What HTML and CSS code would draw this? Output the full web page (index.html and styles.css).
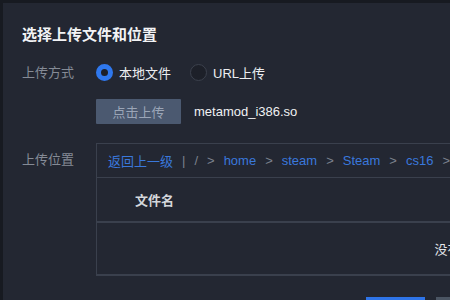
FILE: index.html
```html
<!DOCTYPE html>
<html>
<head>
<meta charset="utf-8">
<link rel="stylesheet" href="styles.css">
</head>
<body>
<div class="dialog">
  <h1 class="title">选择上传文件和位置</h1>
  <div class="row row-mode">
    <div class="label">上传方式</div>
    <div class="field radios">
      <label class="radio"><span class="dot checked"></span><span class="rtext">本地文件</span></label>
      <label class="radio"><span class="dot"></span><span class="rtext">URL上传</span></label>
    </div>
  </div>
  <div class="row row-file">
    <div class="label"></div>
    <div class="field file">
      <button class="upload-btn">点击上传</button>
      <span class="filename">metamod_i386.so</span>
    </div>
  </div>
  <div class="row row-loc">
    <div class="label loc-label">上传位置</div>
    <div class="field">
      <div class="table">
        <div class="crumbs">
          <a class="link">返回上一级</a>
          <span class="sep bar">|</span>
          <span class="sep">/</span>
          <span class="sep">&gt;</span>
          <a class="link">home</a>
          <span class="sep">&gt;</span>
          <a class="link">steam</a>
          <span class="sep">&gt;</span>
          <a class="link">Steam</a>
          <span class="sep">&gt;</span>
          <a class="link">cs16</a>
          <span class="sep">&gt;</span>
        </div>
        <div class="thead"><span class="th">文件名</span></div>
        <div class="tbody"><span class="empty">没有数据</span></div>
      </div>
    </div>
  </div>
  <div class="footer">
    <button class="btn primary">确定</button>
    <button class="btn">取消</button>
  </div>
</div>
</body>
</html>
```

FILE: styles.css
```css
html, body {
  margin: 0;
  padding: 0;
  overflow: hidden;
  height: 100%;
}
body {
  background: #171a21;
  font-family: "Liberation Sans", "Noto Sans CJK SC", sans-serif;
  font-size: 13px;
  color: #e4e6ea;
}
.dialog {
  margin: 3px 0 0 3px;
  width: 900px;
  height: 400px;
  background: #232732;
  padding: 22px 0 0 19px;
  box-sizing: border-box;
}
.title {
  margin: 0;
  font-size: 15px;
  line-height: 20px;
  font-weight: bold;
  color: #f2f3f5;
}
.row {
  display: flex;
  align-items: center;
}
.label {
  width: 74px;
  flex: none;
  color: #858b96;
  line-height: 20px;
}
.row-mode {
  margin-top: 14px;
  height: 27px;
}
.radios {
  display: flex;
  gap: 19px;
}
.radio {
  display: flex;
  align-items: center;
  gap: 6px;
  color: #eceef1;
}
.dot {
  width: 17px;
  height: 17px;
  box-sizing: border-box;
  border-radius: 50%;
  border: 1px solid #3c414d;
  background: #1d2029;
}
.dot.checked {
  border: 5px solid #2f78ee;
  background: #1d2029;
}
.row-file {
  margin-top: 13px;
}
.file {
  display: flex;
  align-items: center;
  gap: 13px;
}
.upload-btn {
  width: 85px;
  height: 25px;
  border: none;
  border-radius: 1px;
  background: #4b5970;
  color: #9ba6b8;
  font-family: inherit;
  font-size: 13px;
  padding: 0;
}
.filename {
  color: #f0f1f3;
  font-size: 13px;
}
.row-loc {
  margin-top: 19px;
  align-items: flex-start;
}
.loc-label {
  line-height: 33px;
}
.row-loc .field {
  flex: 1;
}
.table {
  width: 728px;
  border: 1px solid #3a404d;
  border-right: none;
  box-sizing: border-box;
}
.crumbs {
  height: 33px;
  display: flex;
  align-items: center;
  gap: 9px;
  padding-left: 11px;
  border-bottom: 1px solid #3a404d;
}
.link {
  color: #3a78dc;
}
.sep {
  color: #7c828e;
}
.thead {
  height: 43px;
  display: flex;
  align-items: center;
  padding-left: 38px;
  border-bottom: 2px solid #3a404d;
}
.th {
  font-weight: bold;
  color: #d4d7dc;
}
.tbody {
  height: 51px;
  display: flex;
  align-items: center;
  justify-content: center;
  border-bottom: 1px solid #3a404d;
}
.empty {
  color: #e4e6ea;
}
.footer {
  margin-top: 21px;
  padding-left: 344px;
  display: flex;
  gap: 11px;
}
.btn {
  width: 59px;
  height: 28px;
  border: none;
  background: #4b5563;
  color: #fff;
  font-family: inherit;
  font-size: 13px;
}
.btn.primary {
  background: #2e74e8;
}
```
